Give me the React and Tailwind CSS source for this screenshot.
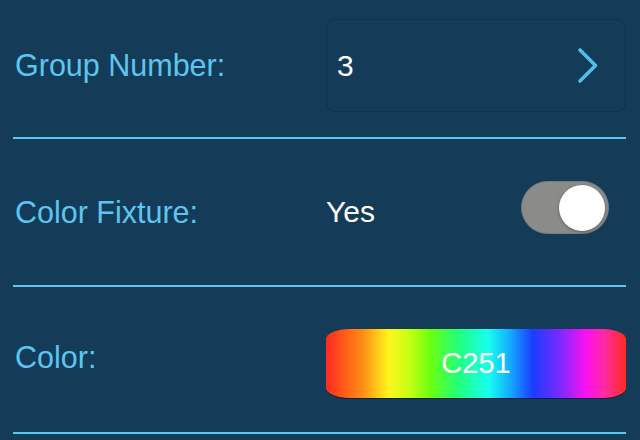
import React from "react";

function Chevron() {
  return (
    <svg width="22" height="37" viewBox="0 0 22 37" fill="none">
      <path d="M3 3 L18.5 18.5 L3 34" stroke="#52bde6" strokeWidth="3.6" strokeLinecap="round" strokeLinejoin="round" />
    </svg>
  );
}

function Line() {
  return <div className="h-[2px] ml-[13px] w-[613px] bg-[#5cc8f0]" />;
}

export default function App() {
  return (
    <div
      className="w-[640px] h-[440px] overflow-hidden bg-[#143b57] text-[30px] leading-none"
      style={{ fontFamily: '"Liberation Sans", Arial, sans-serif' }}
    >
      <div className="h-[137px] pb-[6px] pl-[13px] flex items-center">
        <div className="w-[313px] pl-[2px] text-[30.5px] text-[#5dc6f0]">Group Number:</div>
        <div className="w-[300px] h-[93px] rounded-[9px] border border-[#0f3450] bg-[#143c59] flex items-center justify-between pl-[10px] pr-[26px]">
          <span className="text-white">3</span>
          <Chevron />
        </div>
      </div>
      <Line />
      <div className="h-[146px] pl-[13px] flex items-center">
        <div className="w-[313px] pl-[2px] text-[30.5px] text-[#5dc6f0]">Color Fixture:</div>
        <div className="w-[300px] flex items-center justify-between">
          <span className="text-white">Yes</span>
          <div className="mb-[9px] mr-[17px] w-[88px] h-[53px] rounded-full bg-[#8b8b89] border border-[#7a7a78] flex items-center justify-end pr-[3px]">
            <div className="w-[46px] h-[46px] rounded-full bg-white shadow-[0_1px_3px_rgba(0,0,0,0.35)]" />
          </div>
        </div>
      </div>
      <Line />
      <div className="h-[145px] pl-[13px] flex items-center">
        <div className="w-[313px] pl-[2px] pb-[5px] text-[30.5px] text-[#5dc6f0]">Color:</div>
        <div
          className="mt-[8px] w-[300px] h-[69px] rounded-[24px/10px] flex items-center justify-center text-white text-[29px] shadow-[0_1px_0_#0b2236]"
          style={{
            background:
              "linear-gradient(to right, #ff2a1f 0%, #ff8a14 12%, #ffd21a 18%, #fff61c 21%, #c4ff14 28%, #6aff10 35%, #22ff7a 44%, #18fff0 54%, #14b0ff 61%, #1a3cff 69%, #7a2aff 78%, #ff10f0 87%, #ff2aa0 93%, #ff2a20 100%)",
          }}
        >
          C251
        </div>
      </div>
      <Line />
    </div>
  );
}
